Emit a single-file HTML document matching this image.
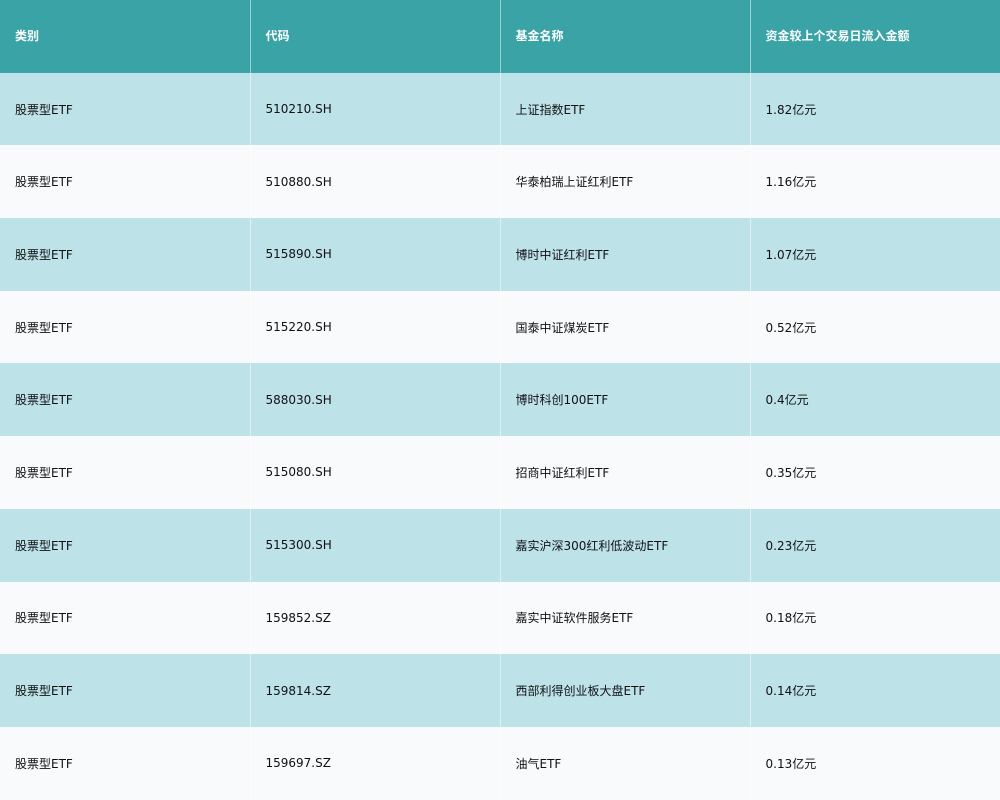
<!DOCTYPE html>
<html><head><meta charset="utf-8"><style>
html,body{margin:0;padding:0;width:1000px;height:800px;overflow:hidden;background:#f8fafc}
table{border-collapse:collapse;width:1000px;table-layout:fixed;font-family:"DejaVu Sans","Noto Sans CJK SC",sans-serif;font-size:12px;color:#111}
td,th{height:72.7px;padding:0 0 0 15px;text-align:left;border-left:1px solid rgba(255,255,255,0.5);box-sizing:border-box;vertical-align:middle}
td:first-child,th:first-child{border-left:none}
th{background:#3aa3a6;color:#fff;font-weight:bold;padding-bottom:2px}
tr:nth-child(odd) td{background:#bde3e9}
tr:nth-child(even) td{background:#f8fafc}
</style></head><body>
<table>
<thead><tr><th>类别</th><th>代码</th><th>基金名称</th><th>资金较上个交易日流入金额</th></tr></thead>
<tbody>
<tr><td>股票型ETF</td><td>510210.SH</td><td>上证指数ETF</td><td>1.82亿元</td></tr>
<tr><td>股票型ETF</td><td>510880.SH</td><td>华泰柏瑞上证红利ETF</td><td>1.16亿元</td></tr>
<tr><td>股票型ETF</td><td>515890.SH</td><td>博时中证红利ETF</td><td>1.07亿元</td></tr>
<tr><td>股票型ETF</td><td>515220.SH</td><td>国泰中证煤炭ETF</td><td>0.52亿元</td></tr>
<tr><td>股票型ETF</td><td>588030.SH</td><td>博时科创100ETF</td><td>0.4亿元</td></tr>
<tr><td>股票型ETF</td><td>515080.SH</td><td>招商中证红利ETF</td><td>0.35亿元</td></tr>
<tr><td>股票型ETF</td><td>515300.SH</td><td>嘉实沪深300红利低波动ETF</td><td>0.23亿元</td></tr>
<tr><td>股票型ETF</td><td>159852.SZ</td><td>嘉实中证软件服务ETF</td><td>0.18亿元</td></tr>
<tr><td>股票型ETF</td><td>159814.SZ</td><td>西部利得创业板大盘ETF</td><td>0.14亿元</td></tr>
<tr><td>股票型ETF</td><td>159697.SZ</td><td>油气ETF</td><td>0.13亿元</td></tr>
</tbody></table>
</body></html>
